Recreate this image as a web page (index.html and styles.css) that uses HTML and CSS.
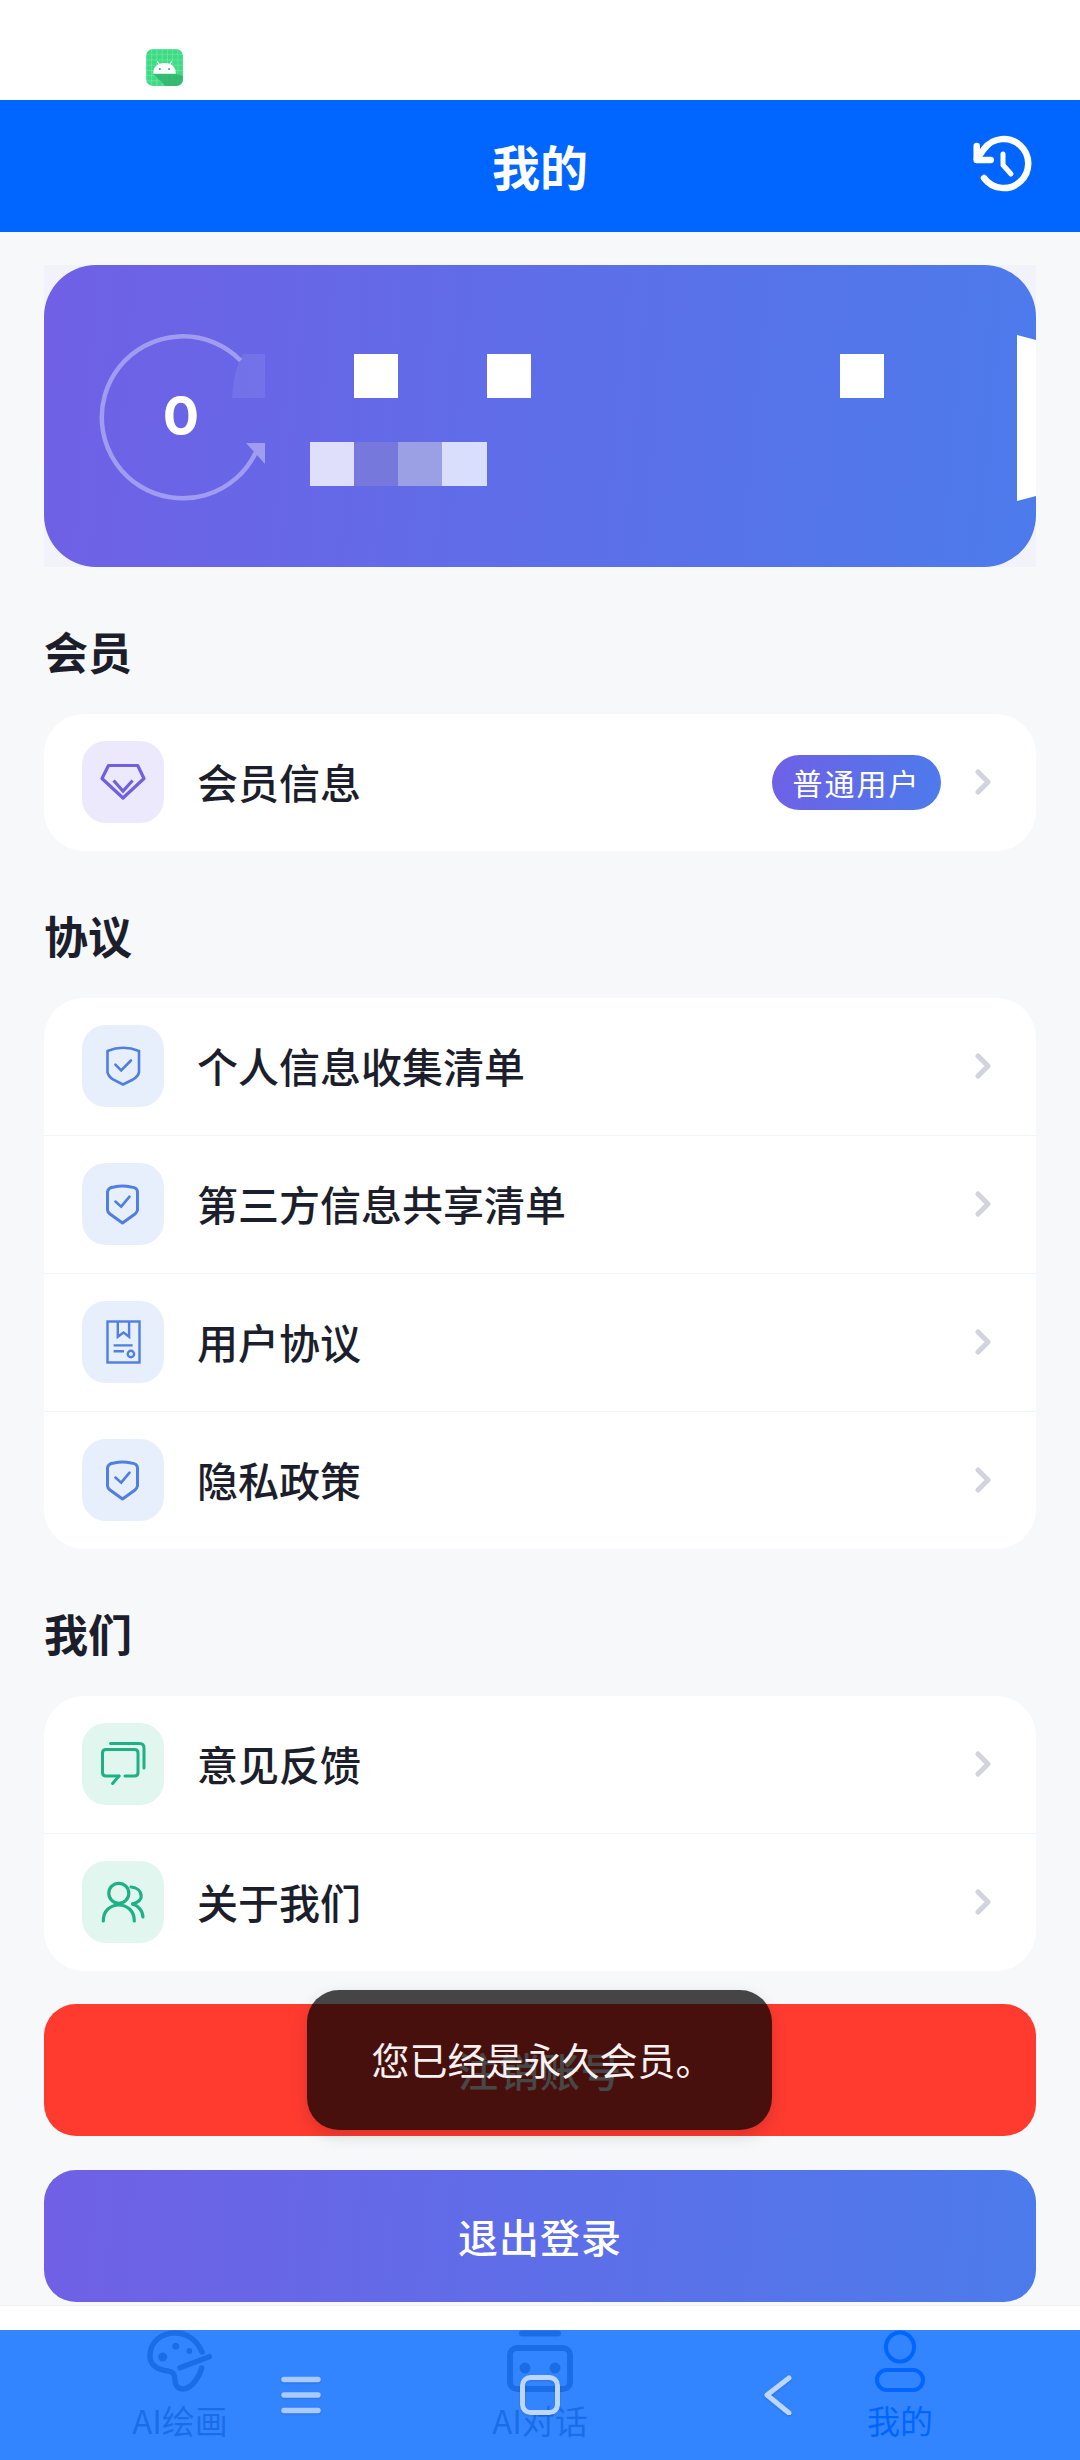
FILE: index.html
```html
<!DOCTYPE html>
<html lang="zh-CN">
<head>
<meta charset="utf-8">
<title>我的</title>
<link rel="stylesheet" href="styles.css">
</head>
<body>
<div class="page">
  <div class="status">
    <svg class="app-icon" viewBox="0 0 36 36">
      <defs>
        <pattern id="grid" width="5.1" height="5.1" patternUnits="userSpaceOnUse">
          <path d="M0 0H5.1M0 0V5.1" stroke="#8ceab8" stroke-width=".9" fill="none"/>
        </pattern>
      </defs>
      <rect width="36" height="36" rx="7" fill="#3ddc84"/>
      <rect width="36" height="36" rx="7" fill="url(#grid)"/>
      <path d="M7 24L19 36H29Q36 36 36 29V26L29 24Z" fill="#2fae6c" opacity=".75"/>
      <path d="M7 24Q7 14 18 13.5Q29 14 29 24Z" fill="#fff"/>
      <path d="M11 12l2 3M25 12l-2 3" stroke="#fff" stroke-width="1"/>
      <circle cx="13.5" cy="19.5" r="1" fill="#2fae6c"/><circle cx="22.5" cy="19.5" r="1" fill="#2fae6c"/>
    </svg>
  </div>

  <header class="topbar">
    <h1 class="topbar-title">我的</h1>
    <svg class="history" viewBox="0 0 66 66" fill="none" stroke="#fff" stroke-width="6.500" stroke-linecap="round" stroke-linejoin="round">
      <path d="M14 45A24.500 24.500 0 1 0 14 16L7 26"/><path d="M6.700 13V27H20.700"/><path d="M33 21V32L41 41" stroke-width="5"/>
    </svg>
  </header>

  <main class="content">
    <div class="hero-wrap">
      <section class="hero">
        <div class="ring">
          <svg class="ring-art" viewBox="0 0 170 164">
            <path d="M141.500 26.500A81 81 0 1 0 157 118" fill="none" stroke="#a09cf0" stroke-width="4.5"/>
            <path d="M166 20H143Q134 40 133 64H166Z" fill="#fff" opacity=".08"/>
            <polygon points="147,109 166,109 166,130" fill="#a09cf0"/>
          </svg>
          <span class="ring-value">0</span>
        </div>
        <div class="mosaic">
          <i class="cell col-2 white"></i><i class="cell col-5 white"></i><i class="cell col-13 white"></i>
          <i class="cell row-3 col-1 tone-a"></i><i class="cell row-3 col-2 tone-b"></i><i class="cell row-3 col-3 tone-c"></i><i class="cell row-3 col-4 tone-d"></i>
        </div>
        <i class="hero-edge"></i>
      </section>
    </div>

    <h2 class="section-title">会员</h2>
    <section class="card">
      <div class="row">
        <span class="icon-box purple">
          <svg viewBox="0 0 82 82" fill="none" stroke="#7060e0" stroke-width="3.2"><polygon points="26.500,24.500 55.700,24.500 62,37.500 41,57 20,37.500" stroke-linejoin="round"/><path d="M31.600 39.500L41 50L50.600 39.500"/></svg>
        </span>
        <span class="row-label">会员信息</span>
        <span class="tag">普通用户</span>
        <svg class="chevron" viewBox="0 0 16 26" fill="none" stroke="#d2d3de" stroke-width="5" stroke-linecap="round" stroke-linejoin="round"><path d="M3 3L13 13L3 23"/></svg>
      </div>
    </section>

    <h2 class="section-title">协议</h2>
    <section class="card">
      <div class="row">
        <span class="icon-box blue">
          <svg viewBox="0 0 82 82" fill="none" stroke="#4f7fe0" stroke-width="2.600"><path d="M25.500 26Q41 19.500 57 26V47Q56.500 51 51 54.500L41 59.500L31 54.500Q26 51 25.500 47Z"/><path d="M33.400 39.600L39.200 45.500L48.900 35.500" stroke-linecap="round"/></svg>
        </span>
        <span class="row-label">个人信息收集清单</span>
        <svg class="chevron" viewBox="0 0 16 26" fill="none" stroke="#d2d3de" stroke-width="5" stroke-linecap="round" stroke-linejoin="round"><path d="M3 3L13 13L3 23"/></svg>
      </div>
      <div class="row">
        <span class="icon-box blue">
          <svg viewBox="0 0 82 82" fill="none" stroke="#4f7fe0" stroke-width="3"><path d="M25.500 29Q26 24.500 32 24Q40.500 22 49 24Q55.500 24.500 55.500 29V47Q55 49 53 51L40.500 60L28 51Q25.500 49 25.500 47Z" stroke-linejoin="round"/><path d="M33.400 38.600L39.200 43.700L47.500 33.700" stroke-linecap="round" stroke-width="2.600"/></svg>
        </span>
        <span class="row-label">第三方信息共享清单</span>
        <svg class="chevron" viewBox="0 0 16 26" fill="none" stroke="#d2d3de" stroke-width="5" stroke-linecap="round" stroke-linejoin="round"><path d="M3 3L13 13L3 23"/></svg>
      </div>
      <div class="row">
        <span class="icon-box blue">
          <svg viewBox="0 0 82 82" fill="none" stroke="#4f7fe0" stroke-width="2.400"><rect x="25.500" y="20.500" width="32" height="41"/><path d="M35.800 20.500V35.800L41.500 31.500L47.100 35.800V20.500"/><path d="M31.600 44.400H50.600M31.600 50.200H42"/><circle cx="48.900" cy="53" r="3.200"/></svg>
        </span>
        <span class="row-label">用户协议</span>
        <svg class="chevron" viewBox="0 0 16 26" fill="none" stroke="#d2d3de" stroke-width="5" stroke-linecap="round" stroke-linejoin="round"><path d="M3 3L13 13L3 23"/></svg>
      </div>
      <div class="row">
        <span class="icon-box blue">
          <svg viewBox="0 0 82 82" fill="none" stroke="#4f7fe0" stroke-width="3"><path d="M25.500 29Q26 24.500 32 24Q40.500 22 49 24Q55.500 24.500 55.500 29V47Q55 49 53 51L40.500 60L28 51Q25.500 49 25.500 47Z" stroke-linejoin="round"/><path d="M33.400 38.600L39.200 43.700L47.500 33.700" stroke-linecap="round" stroke-width="2.600"/></svg>
        </span>
        <span class="row-label">隐私政策</span>
        <svg class="chevron" viewBox="0 0 16 26" fill="none" stroke="#d2d3de" stroke-width="5" stroke-linecap="round" stroke-linejoin="round"><path d="M3 3L13 13L3 23"/></svg>
      </div>
    </section>

    <h2 class="section-title">我们</h2>
    <section class="card">
      <div class="row">
        <span class="icon-box green">
          <svg viewBox="0 0 82 82" fill="none" stroke="#1fb185" stroke-width="3" stroke-linecap="round" stroke-linejoin="round"><path d="M37 53H24Q20.500 53 20.500 49.500V30Q20.500 26.500 24 26.500H52.500Q56 26.500 56 30V49.500Q56 53 52.500 53H43"/><path d="M37 53L30.600 60.500"/><path d="M28.500 20.500H57.500Q62 20.500 62 25V45"/></svg>
        </span>
        <span class="row-label">意见反馈</span>
        <svg class="chevron" viewBox="0 0 16 26" fill="none" stroke="#d2d3de" stroke-width="5" stroke-linecap="round" stroke-linejoin="round"><path d="M3 3L13 13L3 23"/></svg>
      </div>
      <div class="row">
        <span class="icon-box green">
          <svg viewBox="0 0 82 82" fill="none" stroke="#1fb185" stroke-width="3.200" stroke-linecap="round" stroke-linejoin="round"><circle cx="36.800" cy="32.300" r="10"/><path d="M21.300 60C21.300 50 28 44 36.800 44C45.500 44 52.300 50 52.300 60"/><path d="M49 26C55 26.500 59.200 30 59.200 35.500C59.200 39 55.500 41.500 50.600 43"/><path d="M50.600 43C56.500 45 60.900 50 60.900 56"/></svg>
        </span>
        <span class="row-label">关于我们</span>
        <svg class="chevron" viewBox="0 0 16 26" fill="none" stroke="#d2d3de" stroke-width="5" stroke-linecap="round" stroke-linejoin="round"><path d="M3 3L13 13L3 23"/></svg>
      </div>
    </section>

    <button class="action danger" type="button">注销账号</button>
    <button class="action gradient" type="button">退出登录</button>
  </main>

  <nav class="tabs">
    <div class="tab">
      <svg class="tab-icon" viewBox="0 0 66 62" fill="none" stroke="#888" stroke-width="5.500" stroke-linecap="round" stroke-linejoin="round">
        <path d="M54.700 38C53 45 46 58 36.300 59C30 59 28 54 28 50C28 44 26 41.700 21 41C12 40 3 36 3 26C3 12 14 3 28 3C40 3 50 10 55 22"/>
        <path d="M33 37.700L62.300 26.700"/>
        <circle cx="15.700" cy="27" r="4.500" fill="#888" stroke="none"/><circle cx="28.700" cy="16.300" r="3.500" fill="#888" stroke="none"/><circle cx="42.300" cy="21" r="3" fill="#888" stroke="none"/>
      </svg>
      <span class="tab-label">AI绘画</span>
    </div>
    <div class="tab">
      <svg class="tab-icon" viewBox="0 0 66 62" fill="none" stroke="#888" stroke-width="6" stroke-linecap="round">
        <path d="M15 3.500H51"/>
        <rect x="3" y="18" width="60" height="41" rx="7"/>
        <circle cx="18" cy="38" r="5.500" fill="#888" stroke="none"/><circle cx="48" cy="38" r="5.500" fill="#888" stroke="none"/>
      </svg>
      <span class="tab-label">AI对话</span>
    </div>
    <div class="tab active">
      <svg class="tab-icon" viewBox="0 0 66 62" fill="none" stroke="#0066ff" stroke-width="4">
        <ellipse cx="33" cy="17" rx="14" ry="14.500"/>
        <rect x="10" y="40" width="46" height="20" rx="10"/>
      </svg>
      <span class="tab-label">我的</span>
    </div>
  </nav>

  <div class="toast">您已经是永久会员。</div>

  <div class="sysnav">
    <svg class="sys-btn" viewBox="0 0 40 40" fill="none" stroke="#a9caff" stroke-width="5.500" stroke-linecap="round"><path d="M3 4.500H37M3 20H37M3 35.500H37"/></svg>
    <svg class="sys-btn" viewBox="0 0 40 40" fill="none" stroke="#bcd6ff" stroke-width="5"><rect x="2.500" y="2.500" width="35" height="35" rx="8"/></svg>
    <svg class="sys-btn" viewBox="0 0 40 40" fill="none" stroke="#bcd6ff" stroke-width="5" stroke-linecap="round" stroke-linejoin="round"><path d="M30 3L8 20L30 38"/></svg>
  </div>
</div>
</body>
</html>
```

FILE: styles.css
```css
* { box-sizing: border-box; }
html, body { margin: 0; padding: 0; }
body { font-family: "Noto Sans CJK SC", "Noto Sans", sans-serif; color: #1c1f2b; background: #fff; }

.page { position: relative; width: 1080px; height: 2460px; overflow: hidden; display: flex; flex-direction: column; background: #fff; }

.status { height: 100px; padding: 49px 0 0 146px; background: #fff; }
.app-icon { display: block; width: 37px; height: 37px; }

.topbar { position: relative; height: 132px; display: flex; align-items: center; justify-content: center; padding-bottom: 2px; background: #0066ff; }
.topbar-title { margin: 0; font-size: 48px; font-weight: 700; line-height: 1; color: #fff; }
.history { position: absolute; right: 44px; top: 33px; width: 66px; height: 66px; }

.content { height: 2074px; padding: 33px 44px 0; background: #f7f8fa; border-bottom: 1px solid #eff0f2; }

.hero-wrap { background: #f2f3fa; }
.hero { position: relative; height: 302px; display: flex; align-items: center; padding-left: 55px; border-radius: 52px; background: linear-gradient(95deg, #7060e6 0%, #4c7bec 100%); overflow: hidden; }

.ring { position: relative; width: 164px; height: 164px; flex: none; display: flex; align-items: center; justify-content: center; }
.ring-art { position: absolute; left: 0; top: 0; width: 170px; height: 164px; overflow: visible; }
.ring-value { position: relative; font-family: "Inter", sans-serif; font-size: 54px; font-weight: 700; line-height: 1; color: #fff; }

.mosaic { display: grid; grid-template-columns: repeat(13, 44.17px); grid-template-rows: repeat(3, 44px); margin-left: 47px; margin-top: 8px; }
.cell { display: block; grid-row: 1; }
.row-3 { grid-row: 3; }
.col-1 { grid-column: 1; }
.col-2 { grid-column: 2; }
.col-3 { grid-column: 3; }
.col-4 { grid-column: 4; }
.col-5 { grid-column: 5; }
.col-13 { grid-column: 13; }
.white { background: #fff; }
.tone-a { background: #dfdffb; }
.tone-b { background: #7679db; }
.tone-c { background: #9ba0e4; }
.tone-d { background: #d8defb; }
.hero-edge { position: absolute; right: 0; top: 70px; width: 19px; height: 166px; background: #fff; clip-path: polygon(0 0, 100% 3%, 100% 97%, 0 100%); }

.section-title { margin: 57px 0 34px; height: 56px; font-size: 44px; font-weight: 700; line-height: 54px; }

.card { border-radius: 40px; background: #fff; overflow: hidden; }
.row { height: 137px; display: flex; align-items: center; padding: 0 45px 1px 38px; }
.row + .row { height: 138px; border-top: 1px solid #f3f4f6; }

.icon-box { width: 82px; height: 82px; flex: none; border-radius: 24px; }
.icon-box svg { display: block; width: 100%; height: 100%; }
.purple { background: #ede9fc; }
.blue { background: #e7eefc; }
.green { background: #e0f6ee; }

.row-label { flex: 1; margin: 0 0 1px 33px; font-size: 41px; font-weight: 500; line-height: 1.2; }
.tag { margin-right: 34px; width: 169px; height: 55px; display: flex; align-items: center; justify-content: center; border-radius: 28px; background: linear-gradient(100deg, #7060e6, #4c7bec); color: #fff; font-size: 30px; letter-spacing: 2px; line-height: 1; }
.chevron { width: 16px; height: 26px; flex: none; }

.action { display: block; width: 100%; height: 132px; border: 0; border-radius: 32px; color: #fff; font-family: inherit; font-size: 40px; font-weight: 500; letter-spacing: 1px; }
.danger { margin-top: 33px; background: #ff3b30; }
.gradient { margin-top: 34px; background: linear-gradient(95deg, #7060e6, #4c7bec); }

.tabs { flex: 1; display: grid; grid-template-columns: repeat(3, 1fr); padding-top: 24px; background: #fff; }
.tab { display: flex; flex-direction: column; align-items: center; }
.tab-icon { display: block; width: 66px; height: 62px; }
.tab-label { margin-top: 8px; font-size: 33px; line-height: 40px; color: #888; }
.tab.active .tab-label { color: #0066ff; }

.toast { position: absolute; left: 307px; top: 1990px; width: 465px; height: 140px; display: flex; align-items: center; justify-content: center; padding: 0 0 3px 6px; border-radius: 32px; background: rgba(0, 0, 0, .72); box-shadow: 0 6px 16px rgba(0, 0, 0, .14); color: #f6f1f0; font-size: 38px; line-height: 1; }

.sysnav { position: absolute; left: 0; right: 0; bottom: 0; height: 130px; display: flex; align-items: center; justify-content: center; gap: 199px; background: rgba(0, 102, 255, .8); }
.sys-btn { display: block; width: 40px; height: 40px; filter: drop-shadow(0 1px 1px rgba(0, 0, 0, .15)); }
```
